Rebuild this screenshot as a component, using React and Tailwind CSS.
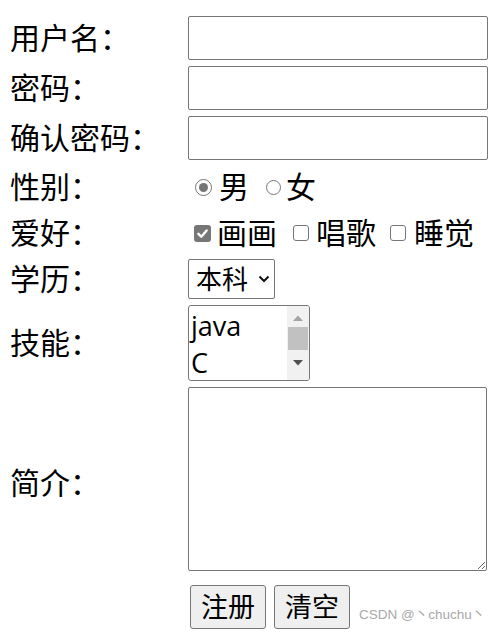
import React from "react";

const FONT = { fontFamily: '"Open Sans","Noto Sans CJK SC",sans-serif' };

function Radio({ checked }) {
  return (
    <span
      className={
        checked
          ? "inline-flex w-[17px] h-[17px] rounded-full border-[1.5px] border-[#767676] items-center justify-center bg-white shrink-0"
          : "inline-flex w-[15px] h-[15px] rounded-full border border-[#767676] items-center justify-center bg-white shrink-0"
      }
    >
      {checked && <span className="w-[9px] h-[9px] rounded-full bg-[#767676]" />}
    </span>
  );
}

function Check({ checked }) {
  if (checked)
    return (
      <span className="inline-flex w-[17px] h-[17px] rounded-[3px] bg-[#767676] items-center justify-center shrink-0">
        <svg width="13" height="13" viewBox="0 0 12 12">
          <path d="M2.2 6.3 L4.9 9 L9.8 3.2" fill="none" stroke="white" strokeWidth="2.2" strokeLinecap="round" strokeLinejoin="round" />
        </svg>
      </span>
    );
  return <span className="inline-block w-[16px] h-[16px] rounded-[3px] border border-[#767676] bg-white shrink-0" />;
}

function Label({ children }) {
  return <div className="w-[178px] shrink-0 text-[30px] leading-[40px] text-black">{children}</div>;
}

export default function App() {
  return (
    <div className="relative w-[499px] h-[632px] bg-white overflow-hidden pl-[10px] pt-[16px]" style={FONT}>
      <div className="flex items-center h-[44px]">
        <Label>用户名：</Label>
        <div className="w-[300px] h-[44px] border border-[#767676] rounded-[2px]" />
      </div>
      <div className="flex items-center h-[44px] mt-[6px]">
        <Label>密码：</Label>
        <div className="w-[300px] h-[44px] border border-[#767676] rounded-[2px]" />
      </div>
      <div className="flex items-center h-[44px] mt-[6px]">
        <Label>确认密码：</Label>
        <div className="w-[300px] h-[44px] border border-[#767676] rounded-[2px]" />
      </div>
      {/* gender */}
      <div className="flex items-center h-[50px] mt-[2px]">
        <Label>性别：</Label>
        <div className="flex items-center text-[30px] leading-[40px]">
          <span className="ml-[7px] flex"><Radio checked /></span>
          <span className="ml-[7px]">男</span>
          <span className="ml-[17px] flex"><Radio /></span>
          <span className="ml-[5px]">女</span>
        </div>
      </div>
      {/* hobbies */}
      <div className="flex items-center h-[42px]">
        <Label>爱好：</Label>
        <div className="flex items-center text-[30px] leading-[40px]">
          <span className="ml-[6px] flex"><Check checked /></span>
          <span className="ml-[6px]">画画</span>
          <span className="ml-[16px] flex"><Check /></span>
          <span className="ml-[7px]">唱歌</span>
          <span className="ml-[14px] flex"><Check /></span>
          <span className="ml-[8px]">睡觉</span>
        </div>
      </div>
      {/* education */}
      <div className="flex items-center h-[40px] mt-[5px]">
        <Label>学历：</Label>
        <div className="flex items-center w-[87px] h-[40px] border border-[#767676] rounded-[2px] pl-[7px] text-[26px] leading-[36px]">
          <span>本科</span>
          <svg className="ml-[10px]" width="12" height="8" viewBox="0 0 12 8">
            <path d="M1.5 1.5 L6 6 L10.5 1.5" fill="none" stroke="#111" strokeWidth="2" />
          </svg>
        </div>
      </div>
      {/* skills */}
      <div className="flex items-center h-[76px] mt-[6px]">
        <Label>技能：</Label>
        <div className="flex w-[122px] h-[76px] border border-[#767676] rounded-[3px] overflow-hidden">
          <div className="flex-1 pl-[2px] text-[27px] leading-[37px] pt-[1px]">
            <div>java</div>
            <div>C</div>
          </div>
          <div className="w-[22px] bg-[#f1f1f1] flex flex-col items-center">
            <svg className="mt-[8px]" width="12" height="8" viewBox="0 0 12 8">
              <path d="M1 7 L6 1.5 L11 7 Z" fill="#a3a3a3" />
            </svg>
            <div className="mt-[5px] w-[20px] h-[23px] bg-[#c1c1c1]" />
            <svg className="mt-[9px]" width="12" height="8" viewBox="0 0 12 8">
              <path d="M1 1 L6 6.5 L11 1 Z" fill="#505050" />
            </svg>
          </div>
        </div>
      </div>
      {/* intro */}
      <div className="flex items-center h-[184px] mt-[6px]">
        <div className="pt-[8px]"><Label>简介：</Label></div>
        <textarea className="w-[299px] h-[184px] border border-[#767676] rounded-[2px] bg-white" />
      </div>
      {/* buttons */}
      <div className="flex items-center h-[44px] mt-[14px]">
        <div className="w-[178px] shrink-0" />
        <button className="ml-[2px] w-[76px] h-[44px] bg-[#efefef] border border-[#767676] rounded-[3px] text-[27px] leading-[36px] text-black">注册</button>
        <button className="ml-[8px] w-[76px] h-[44px] bg-[#efefef] border border-[#767676] rounded-[3px] text-[27px] leading-[36px] text-black">清空</button>
      </div>
      <div
        className="absolute left-[359px] top-[606px] text-[13.5px] leading-[18px] text-[#a8a8a8]"
        style={{ fontFamily: '"Liberation Sans","Noto Sans CJK SC",sans-serif' }}
      >
        CSDN @丶chuchu丶
      </div>
    </div>
  );
}
